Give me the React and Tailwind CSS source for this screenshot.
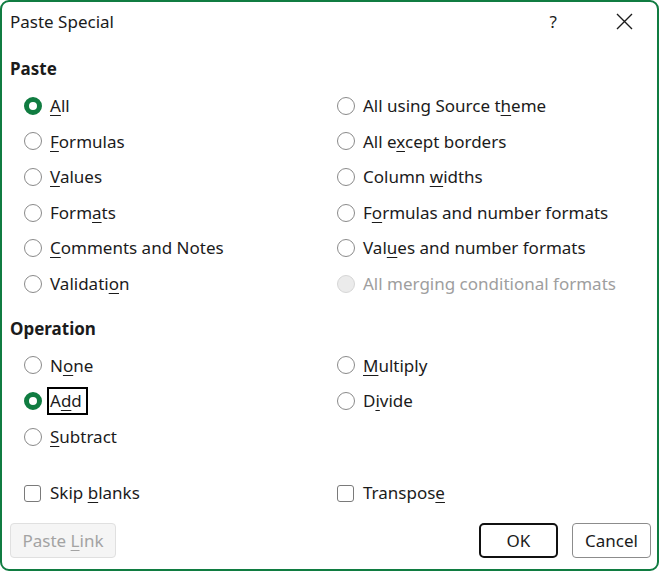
import React from "react";

const font = { fontFamily: '"Noto Sans", "Open Sans", sans-serif' };

function Radio({ checked, disabled }) {
  if (checked) {
    return (
      <span className="w-[18px] h-[18px] rounded-full border-[5px] border-[#107c41] bg-white shrink-0 box-border" />
    );
  }
  if (disabled) {
    return (
      <span className="w-[18px] h-[18px] rounded-full border border-[#d6d6d6] bg-[#ebebeb] shrink-0 box-border" />
    );
  }
  return (
    <span className="w-[18px] h-[18px] rounded-full border border-[#8a8a8a] bg-white shrink-0 box-border" />
  );
}

function Label({ text, u, disabled, focus }) {
  let content = text;
  if (u !== undefined) {
    content = (
      <>
        {text.slice(0, u)}
        <u className="underline underline-offset-[3px] decoration-1">{text[u]}</u>
        {text.slice(u + 1)}
      </>
    );
  }
  if (focus) {
    return (
      <span className="inline-block text-[#1b1b1b] border-2 border-black leading-[24px] pl-[1px] pr-[4px] -ml-[3px]">
        {content}
      </span>
    );
  }
  return <span className={disabled ? "text-[#9e9e9e]" : "text-[#1b1b1b]"}>{content}</span>;
}

function RadioRow({ text, u, checked, disabled, focus }) {
  return (
    <div className="h-[35.6px] flex items-center gap-[8px]">
      <Radio checked={checked} disabled={disabled} />
      <Label text={text} u={u} disabled={disabled} focus={focus} />
    </div>
  );
}

function Check({ text, u }) {
  return (
    <div className="h-[35.6px] flex items-center gap-[9px]">
      <span className="w-[17px] h-[17px] rounded-[3px] border border-[#7a7a7a] bg-white shrink-0 box-border" />
      <Label text={text} u={u} />
    </div>
  );
}

export default function App() {
  return (
    <div
      style={font}
      className="w-[659px] h-[571px] bg-white border-2 border-[#107c41] rounded-[9px] box-border flex flex-col text-[17px] overflow-hidden"
    >
      <div className="h-[39px] flex items-center pl-[8px] pr-[24px]">
        <span className="text-[17px] text-[#1b1b1b] flex-1">Paste Special</span>
        <span className="text-[17px] text-[#1b1b1b] mr-[59px]">?</span>
        <svg width="17" height="17" viewBox="0 0 17 17" className="text-[#1b1b1b]">
          <path d="M1 1 L16 16 M16 1 L1 16" stroke="currentColor" strokeWidth="1.4" fill="none" />
        </svg>
      </div>

      <div className="mt-[16px] pl-[8px] h-[24px] flex items-center font-bold text-[#1b1b1b]">Paste</div>

      <div className="mt-[7px] grid grid-cols-[313px_1fr] pl-[22px]">
        <RadioRow text="All" u={0} checked />
        <RadioRow text="All using Source theme" u={18} />
        <RadioRow text="Formulas" u={0} />
        <RadioRow text="All except borders" u={5} />
        <RadioRow text="Values" u={0} />
        <RadioRow text="Column widths" u={7} />
        <RadioRow text="Formats" u={4} />
        <RadioRow text="Formulas and number formats" u={1} />
        <RadioRow text="Comments and Notes" u={0} />
        <RadioRow text="Values and number formats" u={3} />
        <RadioRow text="Validation" u={8} />
        <RadioRow text="All merging conditional formats" disabled />
      </div>

      <div className="mt-[15px] pl-[8px] h-[24px] flex items-center font-bold text-[#1b1b1b]">Operation</div>

      <div className="mt-[7px] grid grid-cols-[313px_1fr] pl-[22px]">
        <RadioRow text="None" u={1} />
        <RadioRow text="Multiply" u={0} />
        <RadioRow text="Add" u={1} checked focus />
        <RadioRow text="Divide" u={1} />
        <RadioRow text="Subtract" u={0} />
        <div />
      </div>

      <div className="mt-[21px] grid grid-cols-[313px_1fr] pl-[22px]">
        <Check text="Skip blanks" u={5} />
        <Check text="Transpose" u={8} />
      </div>

      <div className="mt-[12px] flex items-center pl-[8px] pr-[6px]">
        <button className="h-[35px] w-[106px] rounded-[4px] border border-[#e0e0e0] bg-[#f5f5f5] text-[#a3a3a3] text-[17px]">
          Paste <u className="underline underline-offset-[3px] decoration-1">L</u>ink
        </button>
        <div className="flex-1" />
        <button className="h-[35px] w-[79px] rounded-[5px] border-2 border-[#111] bg-white text-[#1b1b1b] text-[17px]">
          OK
        </button>
        <button className="ml-[14px] h-[35px] w-[79px] rounded-[4px] border border-[#8c8c8c] bg-white text-[#1b1b1b] text-[17px]">
          Cancel
        </button>
      </div>
    </div>
  );
}
